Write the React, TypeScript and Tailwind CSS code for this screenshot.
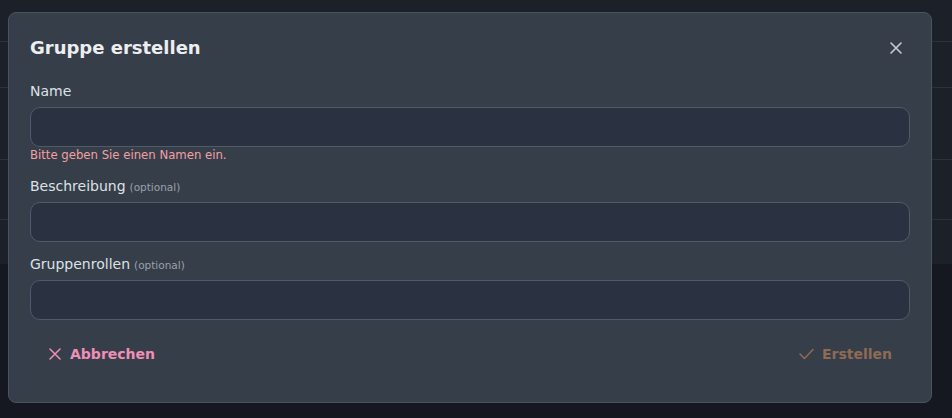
import React from "react";

export default function App() {
  return (
    <div
      className="relative w-[952px] h-[418px] overflow-hidden bg-[#151820]"
      style={{ fontFamily: '"DejaVu Sans", sans-serif' }}
    >
      {/* page behind the backdrop */}
      <div className="flex flex-col bg-[#1c2029]">
        <div className="h-[42px] border-b border-[#2b303a]" />
        <div className="h-[46px] border-b border-[#2b303a]" />
        <div className="h-[72px] border-b border-[#2b303a]" />
        <div className="h-[60px] border-b border-[#2b303a]" />
        <div className="h-[44px]" />
      </div>

      {/* dialog */}
      <div className="absolute left-[8px] top-[12px] w-[924px] h-[391px] rounded-lg border border-[#4a5261] bg-[#363e4a] px-[21px] pt-[21px] flex flex-col">
        <div className="flex items-center justify-between h-[28px]">
          <h2 className="text-[18px] font-bold text-[#eceef1] leading-[28px]">Gruppe erstellen</h2>
          <button className="w-[28px] h-[28px] flex items-center justify-center text-[#c9ced6]">
            <svg width="14" height="14" viewBox="0 0 14 14" fill="none" stroke="currentColor" strokeWidth="1.6" strokeLinecap="round">
              <path d="M2 2 L12 12 M12 2 L2 12" />
            </svg>
          </button>
        </div>

        <div className="mt-[19px] flex flex-col">
          <label className="h-[20px] text-[14px] leading-[20px] text-[#dde1e6]">Name</label>
          <input className="mt-[6px] h-[40px] w-full rounded-[10px] border border-[#505a68] bg-[#2a3241] outline-none" />
          <div className="h-[16px] text-[11.7px] leading-[16px] text-[#f3a0a4]">Bitte geben Sie einen Namen ein.</div>
        </div>

        <div className="mt-[13px] flex flex-col">
          <label className="h-[20px] flex items-baseline gap-[4px] text-[14px] leading-[20px] text-[#dde1e6]">
            <span>Beschreibung</span>
            <span className="text-[10.5px] leading-[20px] text-[#9aa1ab]">(optional)</span>
          </label>
          <input className="mt-[6px] h-[40px] w-full rounded-[10px] border border-[#505a68] bg-[#2a3241] outline-none" />
        </div>

        <div className="mt-[12px] flex flex-col">
          <label className="h-[20px] flex items-baseline gap-[4px] text-[14px] leading-[20px] text-[#dde1e6]">
            <span>Gruppenrollen</span>
            <span className="text-[10.5px] leading-[20px] text-[#9aa1ab]">(optional)</span>
          </label>
          <input className="mt-[6px] h-[40px] w-full rounded-[10px] border border-[#505a68] bg-[#2a3241] outline-none" />
        </div>

        <div className="mt-[14px] flex items-center justify-between h-[40px]">
          <button className="flex items-center gap-[9px] h-[40px] pl-[19px] pr-[18px] text-[14px] font-bold text-[#f08fb5]">
            <svg width="12" height="12" viewBox="0 0 12 12" fill="none" stroke="currentColor" strokeWidth="1.5" strokeLinecap="round">
              <path d="M1 1 L11 11 M11 1 L1 11" />
            </svg>
            Abbrechen
          </button>
          <button className="flex items-center gap-[8px] h-[40px] px-[18px] text-[14px] font-bold text-[#8f6b53]">
            <svg width="15" height="12" viewBox="0 0 15 12" fill="none" stroke="currentColor" strokeWidth="1.5" strokeLinecap="round" strokeLinejoin="round">
              <path d="M1 6 L5.5 10.5 L14 1.5" />
            </svg>
            Erstellen
          </button>
        </div>
      </div>
    </div>
  );
}
